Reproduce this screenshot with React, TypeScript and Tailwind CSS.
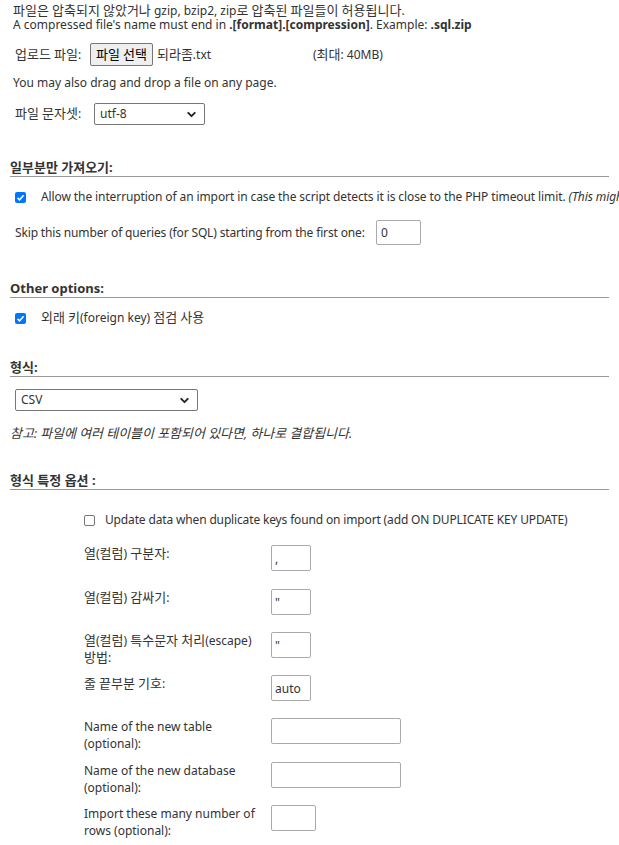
import { ChevronDown } from 'lucide-react';

const font = { fontFamily: '"Noto Sans", "Noto Sans CJK KR", sans-serif' };

// hangul runs get a slightly larger size so they take the width they have in the reference
function K({ t }: { t: string }) {
  const parts = t.split(/([\uac00-\ud7a3]+)/);
  return (
    <>
      {parts.map((p, i) =>
        i % 2 === 1 ? (
          <span key={i} className="text-[13px] leading-none">
            {p}
          </span>
        ) : (
          p
        ),
      )}
    </>
  );
}

function Heading({ children }: { children: React.ReactNode }) {
  return (
    <div className="mx-[10px] border-b border-[#999] pb-[1px] text-[13px] font-bold leading-[16px] text-[#333]">
      {children}
    </div>
  );
}

function Select({ value, width }: { value: string; width: string }) {
  return (
    <div className={`flex h-[22px] items-center justify-between rounded-[2px] border border-[#767676] bg-white pl-[5px] pr-[6px] ${width}`}>
      <span>{value}</span>
      <ChevronDown size={13} strokeWidth={3.5} className="text-[#222]" />
    </div>
  );
}

function Check({ checked }: { checked: boolean }) {
  return checked ? (
    <span className="flex h-[11px] w-[11px] shrink-0 items-center justify-center rounded-[2px] bg-[#0075ff]">
      <svg width="9" height="9" viewBox="0 0 9 9">
        <path d="M1.5 4.8 L3.6 6.8 L7.6 2.2" stroke="white" strokeWidth="1.6" fill="none" />
      </svg>
    </span>
  ) : (
    <span className="h-[11px] w-[11px] shrink-0 rounded-[2px] border border-[#767676] bg-white" />
  );
}

const rows = [
  { label: ['열(컬럼) 구분자:'], value: ',', w: 'w-[40px]', h: 'h-[44px]' },
  { label: ['열(컬럼) 감싸기:'], value: '"', w: 'w-[40px]', h: 'h-[43px]' },
  { label: ['열(컬럼) 특수문자 처리(escape)', '방법:'], value: '"', w: 'w-[40px]', h: 'h-[43px]' },
  { label: ['줄 끝부분 기호:'], value: 'auto', w: 'w-[40px]', h: 'h-[43px]' },
  { label: ['Name of the new table', '(optional):'], value: '', w: 'w-[130px]', h: 'h-[44px]' },
  { label: ['Name of the new database', '(optional):'], value: '', w: 'w-[130px]', h: 'h-[43px]' },
  { label: ['Import these many number of', 'rows (optional):'], value: '', w: 'w-[45px]', h: 'h-[40px]' },
];

export default function App() {
  return (
    <div className="h-[845px] w-[619px] overflow-hidden bg-white text-[12px] leading-[16px] text-[#333]" style={font}>
      <div className="px-[13px] pt-[4px] leading-[14px]">
        <div>
          <K t="파일은 압축되지 않았거나 gzip, bzip2, zip로 압축된 파일들이 허용됩니다." />
        </div>
        <div>
          A compressed file's name must end in <b>.[format].[compression]</b>. Example: <b>.sql.zip</b>
        </div>
      </div>

      <div className="mt-[11px] flex h-[23px] items-center pl-[15px]">
        <span className="w-[75px]">
          <K t="업로드 파일:" />
        </span>
        <span className="flex h-[23px] items-center rounded-[2px] border border-[#767676] bg-[#efefef] px-[5px] text-black">
          <span>
            <K t="파일 선택" />
          </span>
        </span>
        <span className="ml-[4px] w-[156px]">
          <K t="되라좀.txt" />
        </span>
        <span>
          <K t="(최대: 40MB)" />
        </span>
      </div>

      <div className="mt-[9px] pl-[13px]">You may also drag and drop a file on any page.</div>

      <div className="mt-[12px] flex items-center pl-[15px]">
        <span className="w-[79px]">
          <K t="파일 문자셋:" />
        </span>
        <Select value="utf-8" width="w-[111px]" />
      </div>

      <div className="mt-[34px]">
        <Heading>
          <K t="일부분만 가져오기:" />
        </Heading>
      </div>
      <div className="mt-[12px] flex items-center whitespace-nowrap pl-[15px]">
        <Check checked />
        <span className="ml-[15px] tracking-[-0.1px]">
          Allow the interruption of an import in case the script detects it is close to the PHP timeout limit.{' '}
          <i>(This might be a good way to import large files, however it can break transactions.)</i>
        </span>
      </div>
      <div className="mt-[15px] flex items-center pl-[15px]">
        <span className="w-[361px] tracking-[-0.15px]">Skip this number of queries (for SQL) starting from the first one:</span>
        <span className="flex h-[25px] w-[45px] items-center rounded-[2px] border border-[#aaa] pl-[4px]">0</span>
      </div>

      <div className="mt-[35px]">
        <Heading>Other options:</Heading>
      </div>
      <div className="mt-[12px] flex items-center pl-[15px]">
        <Check checked />
        <span className="ml-[15px]">
          <K t="외래 키(foreign key) 점검 사용" />
        </span>
      </div>

      <div className="mt-[33px]">
        <Heading>
          <K t="형식:" />
        </Heading>
      </div>
      <div className="mt-[12px] pl-[15px]">
        <Select value="CSV" width="w-[183px]" />
      </div>
      <div className="mt-[15px] pl-[10px] italic">
        <K t="참고: 파일에 여러 테이블이 포함되어 있다면, 하나로 결합됩니다." />
      </div>

      <div className="mt-[30px]">
        <Heading>
          <K t="형식 특정 옵션 :" />
        </Heading>
      </div>

      <div className="pl-[84px]">
        <div className="mt-[22px] flex items-center">
          <Check checked={false} />
          <span className="ml-[10px] tracking-[-0.15px]">
            Update data when duplicate keys found on import (add ON DUPLICATE KEY UPDATE)
          </span>
        </div>
        <div className="mt-[17px]">
          {rows.map((r, i) => (
            <div key={i} className={`flex items-start ${r.h}`}>
              <div className="w-[187px] leading-[17px]">
                {r.label.map((l, j) => (
                  <div key={j}>
                    <K t={l} />
                  </div>
                ))}
              </div>
              <span className={`flex h-[26px] items-center rounded-[2px] border border-[#aaa] pl-[3px] pt-[2px] ${r.w}`}>
                {r.value}
              </span>
            </div>
          ))}
        </div>
      </div>
    </div>
  );
}
